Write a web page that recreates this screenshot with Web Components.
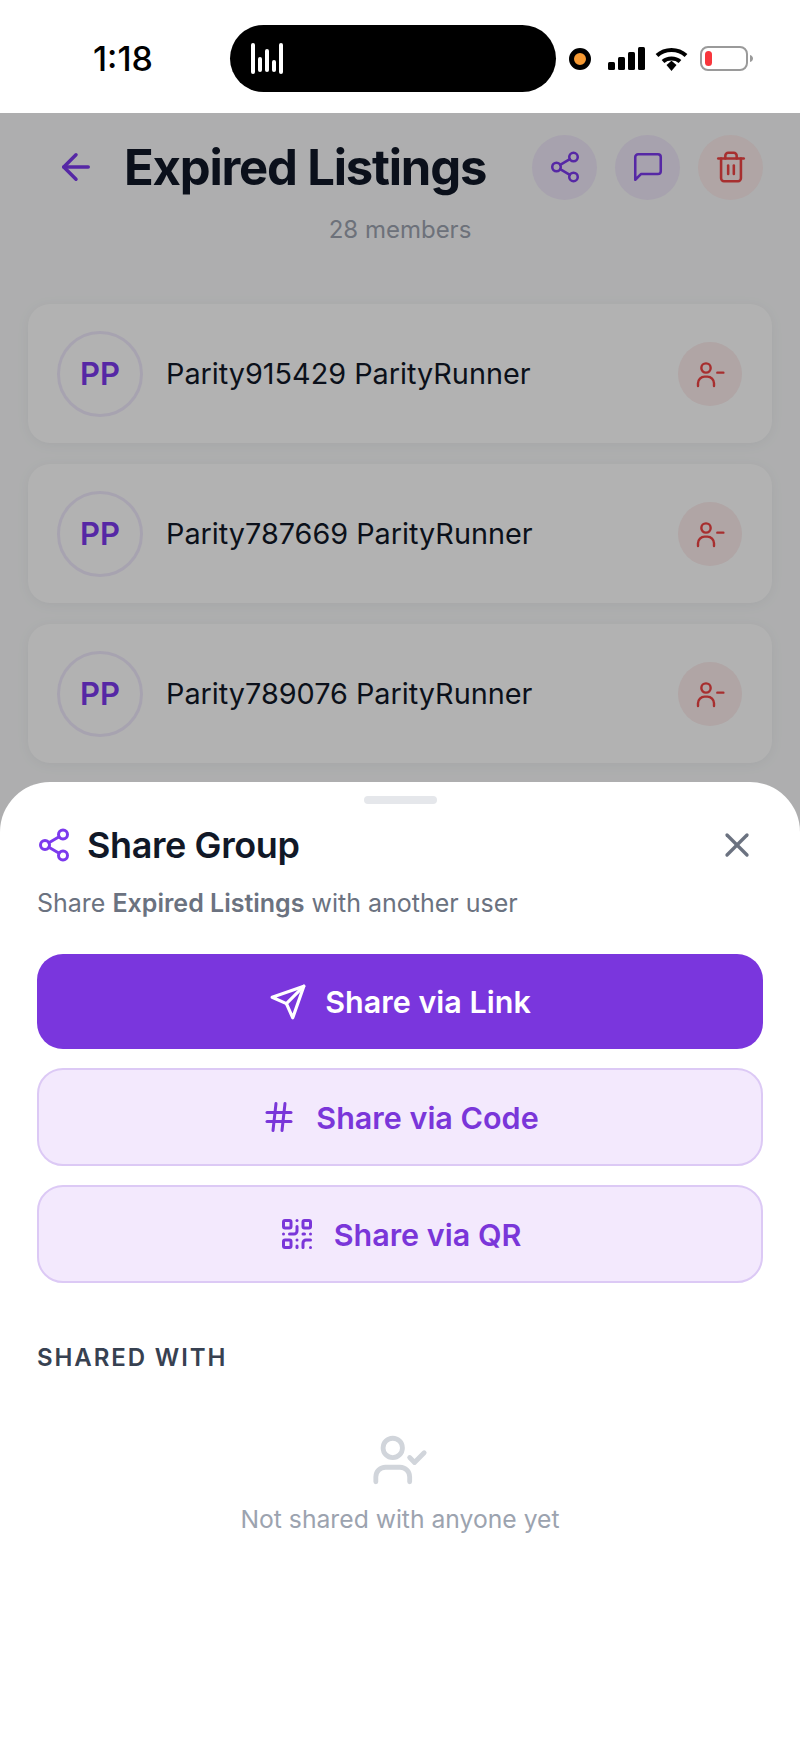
<!DOCTYPE html>
<html>
<head>
<meta charset="utf-8">
<title>Expired Listings</title>
<style>
    html, body { margin: 0; padding: 0; }
    body {
        position: relative;
        width: 800px;
        height: 1738px;
        overflow: hidden;
        background: #f9fafb;
        font-family: Inter, "Liberation Sans", sans-serif;
    }
</style>
</head>
<body>
<status-bar></status-bar>
<group-screen title="Expired Listings" members="28 members">
    <member-card name="Parity915429 ParityRunner" initials="PP"></member-card>
    <member-card name="Parity787669 ParityRunner" initials="PP"></member-card>
    <member-card name="Parity789076 ParityRunner" initials="PP"></member-card>
</group-screen>
<share-sheet group="Expired Listings">
    <share-button variant="primary" icon="send" size="38" gap="18">Share via Link</share-button>
    <share-button icon="hash" size="36" gap="19">Share via Code</share-button>
    <share-button icon="qr" size="36" gap="19">Share via QR</share-button>
</share-sheet>

<script>
const ICONS = {
    back: '<path d="M12 19l-7-7 7-7"/><path d="M19 12H5"/>',
    share: '<circle cx="18" cy="5" r="3"/><circle cx="6" cy="12" r="3"/><circle cx="18" cy="19" r="3"/><path d="M8.59 13.51l6.83 3.98"/><path d="M15.41 6.51l-6.82 3.98"/>',
    message: '<path d="M21 15a2 2 0 0 1-2 2H7l-4 4V5a2 2 0 0 1 2-2h14a2 2 0 0 1 2 2z"/>',
    trash: '<path d="M3 6h18"/><path d="M19 6v14c0 1-1 2-2 2H7c-1 0-2-1-2-2V6"/><path d="M8 6V4c0-1 1-2 2-2h4c1 0 2 1 2 2v2"/><path d="M10 11v6"/><path d="M14 11v6"/>',
    userminus: '<path d="M3 21v-2a5 5 0 0 1 5-5h2a5 5 0 0 1 5 5v2"/><circle cx="9" cy="7.500" r="3.500"/><path d="M22 11h-4.500"/>',
    usercheck: '<path d="M16 21v-2a4 4 0 0 0-4-4H6a4 4 0 0 0-4 4v2"/><circle cx="9" cy="7" r="4"/><path d="M16 11l2 2 4-4"/>',
    close: '<path d="M18 6L6 18"/><path d="M6 6l12 12"/>',
    send: '<path d="M22 2L11 13"/><path d="M22 2l-7 20-4-9-9-4z"/>',
    hash: '<path d="M4 9h16"/><path d="M4 15h16"/><path d="M10 3L8 21"/><path d="M16 3l-2 18"/>',
    qr: '<rect x="3" y="3" width="5" height="5" rx="1"/><rect x="16" y="3" width="5" height="5" rx="1"/><rect x="3" y="16" width="5" height="5" rx="1"/><path d="M21 16h-3a2 2 0 0 0-2 2v3"/><path d="M21 21v.01"/><path d="M12 7v3a2 2 0 0 1-2 2H7"/><path d="M3 12h.01"/><path d="M12 3h.01"/><path d="M12 16v.01"/><path d="M16 12h1"/><path d="M21 12v.01"/><path d="M12 21v-1"/>'
};

class AppIcon extends HTMLElement {
    connectedCallback() {
        const size = this.getAttribute('size') || 24;
        const stroke = this.getAttribute('stroke') || 2;
        this.attachShadow({ mode: 'open' });
        this.shadowRoot.innerHTML = `
            <style>
                :host { display: block; flex: none; line-height: 0; }
            </style>
            <svg width="${size}" height="${size}" viewBox="0 0 24 24" fill="none" stroke="currentColor"
                stroke-width="${stroke}" stroke-linecap="round" stroke-linejoin="round">${ICONS[this.getAttribute('name')]}</svg>
        `;
    }
}

class StatusBar extends HTMLElement {
    constructor() {
        super();
        this.attachShadow({ mode: 'open' });
        this.shadowRoot.innerHTML = `
            <style>
                :host {
                    display: flex;
                    position: relative;
                    z-index: 2;
                    align-items: center;
                    height: 113px;
                    padding-top: 4px;
                    box-sizing: border-box;
                    background: #fff;
                    color: #000;
                }
                .time {
                    width: 230px;
                    box-sizing: border-box;
                    padding-left: 93px;
                    font: 500 34px "Inter", sans-serif;
                }
                .pill {
                    display: flex;
                    align-items: center;
                    width: 326px;
                    height: 67px;
                    box-sizing: border-box;
                    padding-left: 21px;
                    border-radius: 34px;
                    background: #000;
                }
                .bars { display: flex; align-items: flex-end; gap: 3px; height: 31px; }
                .bars i { display: block; width: 4px; border-radius: 2px; background: #fff; }
                .bars i.short { margin-bottom: 2px; }
                .right { display: flex; align-items: center; margin-left: 13px; }
                .dot { width: 12px; height: 12px; border: 5px solid #000; border-radius: 50%; background: #f79a33; }
                svg { display: block; }
            </style>
            <div class="time">1:18</div>
            <div class="pill">
                <div class="bars">
                    <i style="height:31px"></i><i class="short" style="height:15px"></i><i class="short" style="height:23px"></i><i class="short" style="height:12px"></i><i style="height:31px"></i>
                </div>
            </div>
            <div class="right">
                <div class="dot"></div>
                <svg style="margin-left:17px" width="37" height="23" viewBox="0 0 37 23" fill="#000">
                    <rect x="0" y="15" width="7" height="8" rx="1.5"/><rect x="10" y="10" width="7" height="13" rx="1.5"/>
                    <rect x="20" y="5" width="7" height="18" rx="1.5"/><rect x="30" y="0" width="7" height="23" rx="1.5"/>
                </svg>
                <svg style="margin-left:10px" width="33" height="24" viewBox="0 0 33 24" fill="none" stroke="#000" stroke-width="4">
                    <path d="M2 8.5C10 1 23 1 31 8.5"/><path d="M8 14.5C12.500 10.500 20.500 10.500 25 14.500"/>
                    <path d="M11.500 18L16.500 13.800L21.500 18L16.500 24Z" fill="#000" stroke="none"/>
                </svg>
                <svg style="margin-left:12px" width="54" height="25" viewBox="0 0 54 25">
                    <rect x="1" y="1" width="46" height="23" rx="7" fill="none" stroke="#9a9a9a" stroke-width="2"/>
                    <rect x="5" y="5" width="7" height="15" rx="3.500" fill="#f8363c"/>
                    <path d="M50 9c2 .5 3 2 3 3.500s-1 3-3 3.500z" fill="#9a9a9a"/>
                </svg>
            </div>
        `;
    }
}

class GroupScreen extends HTMLElement {
    connectedCallback() {
        this.attachShadow({ mode: 'open' });
        this.shadowRoot.innerHTML = `
            <style>
                :host { display: block; position: relative; height: 1625px; box-sizing: border-box; padding-top: 21px; }
                .scrim { position: absolute; inset: 0; background: rgba(0, 0, 0, 0.3); }
                .top { display: flex; align-items: center; height: 66px; padding: 0 37px 0 55px; }
                .back { color: #7c3aed; }
                h1 {
                    margin: 0 0 0 27px;
                    font: 700 49px Inter, sans-serif;
                    letter-spacing: -1.2px;
                    color: #111827;
                    white-space: nowrap;
                }
                .actions { display: flex; gap: 18px; margin-left: auto; }
                .action {
                    display: flex;
                    align-items: center;
                    justify-content: center;
                    width: 65px;
                    height: 65px;
                    border-radius: 50%;
                    background: #f0e8fa;
                    color: #7c3aed;
                }
                .action.red { background: #fcecec; color: #ef4444; }
                .count { margin-top: 15px; text-align: center; font: 400 24px/30px Inter, sans-serif; color: #9ca3af; }
                .list { display: flex; flex-direction: column; gap: 21px; margin: 59px 28px 0; }
            </style>
            <div class="top">
                <app-icon class="back" name="back" size="42" stroke="2"></app-icon>
                <h1>${this.getAttribute('title')}</h1>
                <div class="actions">
                    <div class="action"><app-icon name="share" size="34" stroke="1.800"></app-icon></div>
                    <div class="action"><app-icon name="message" size="34" stroke="1.800"></app-icon></div>
                    <div class="action red"><app-icon name="trash" size="34" stroke="1.800"></app-icon></div>
                </div>
            </div>
            <div class="count">${this.getAttribute('members')}</div>
            <div class="list"><slot></slot></div>
            <div class="scrim"></div>
        `;
    }
}

class MemberCard extends HTMLElement {
    connectedCallback() {
        this.attachShadow({ mode: 'open' });
        this.shadowRoot.innerHTML = `
            <style>
                :host {
                    display: flex;
                    align-items: center;
                    height: 139px;
                    box-sizing: border-box;
                    padding: 0 30px 0 29px;
                    border-radius: 22px;
                    background: #fff;
                    box-shadow: 0 2px 14px rgba(0, 0, 0, 0.05);
                }
                .avatar {
                    display: flex;
                    align-items: center;
                    justify-content: center;
                    flex: none;
                    width: 86px;
                    height: 86px;
                    box-sizing: border-box;
                    border: 3px solid #f0eafc;
                    border-radius: 50%;
                    background: #fff;
                    font: 600 31px Inter, sans-serif;
                    color: #7c3aed;
                }
                .name { margin-left: 23px; font: 400 28.800px Inter, sans-serif; color: #111827; white-space: nowrap; }
                .remove {
                    display: flex;
                    align-items: center;
                    justify-content: center;
                    width: 64px;
                    height: 64px;
                    margin-left: auto;
                    border-radius: 50%;
                    background: #fcecec;
                    color: #ef4444;
                }
            </style>
            <div class="avatar">${this.getAttribute('initials')}</div>
            <div class="name">${this.getAttribute('name')}</div>
            <div class="remove"><app-icon name="userminus" size="32" stroke="1.800"></app-icon></div>
        `;
    }
}

class ShareButton extends HTMLElement {
    connectedCallback() {
        this.attachShadow({ mode: 'open' });
        this.shadowRoot.innerHTML = `
            <style>
                :host {
                    display: flex;
                    align-items: center;
                    justify-content: center;
                    gap: ${this.getAttribute('gap')}px;
                    height: 98px;
                    box-sizing: border-box;
                    border: 2px solid #dcc9f5;
                    border-radius: 26px;
                    background: #f3e9fd;
                    color: #7a36d9;
                    font: 600 30.5px Inter, sans-serif;
                }
                :host([variant="primary"]) {
                    height: 95px;
                    border: 0;
                    background: #7a36dd;
                    color: #fff;
                }
            </style>
            <app-icon name="${this.getAttribute('icon')}" size="${this.getAttribute('size')}"></app-icon>
            <span><slot></slot></span>
        `;
    }
}

class ShareSheet extends HTMLElement {
    connectedCallback() {
        this.attachShadow({ mode: 'open' });
        this.shadowRoot.innerHTML = `
            <style>
                :host {
                    display: block;
                    position: absolute;
                    z-index: 3;
                    left: 0;
                    right: 0;
                    bottom: 0;
                    height: 956px;
                    box-sizing: border-box;
                    padding: 14px 37px 0;
                    border-radius: 50px 50px 0 0;
                    background: #fff;
                }
                .handle { width: 73px; height: 8px; margin: 0 auto; border-radius: 4px; background: #e5e7eb; }
                .head { display: flex; align-items: center; height: 40px; margin-top: 21px; }
                .head .mark { color: #7c3aed; margin-left: -1px; }
                h2 { margin: 0 0 0 15px; font: 600 36px Inter, sans-serif; letter-spacing: -0.4px; color: #111827; }
                .close { margin-left: auto; margin-right: 6px; color: #6b7280; }
                p { margin: 23px 0 0; font: 400 25px/30px Inter, sans-serif; color: #6b7280; }
                p b { font-weight: 600; }
                .buttons { display: flex; flex-direction: column; gap: 19px; margin-top: 36px; }
                .label { margin-top: 60px; font: 600 24px/30px Inter, sans-serif; letter-spacing: 1.900px; color: #374151; }
                .empty { display: flex; flex-direction: column; align-items: center; margin-top: 58px; color: #d1d5db; }
                .empty div { margin-top: 15px; font: 400 24.700px/30px Inter, sans-serif; color: #9ca3af; }
            </style>
            <div class="handle"></div>
            <div class="head">
                <app-icon class="mark" name="share" size="36"></app-icon>
                <h2>Share Group</h2>
                <app-icon class="close" name="close" size="40"></app-icon>
            </div>
            <p>Share <b>${this.getAttribute('group')}</b> with another user</p>
            <div class="buttons"><slot></slot></div>
            <div class="label">SHARED WITH</div>
            <div class="empty">
                <app-icon name="usercheck" size="58"></app-icon>
                <div>Not shared with anyone yet</div>
            </div>
        `;
    }
}

customElements.define('app-icon', AppIcon);
customElements.define('status-bar', StatusBar);
customElements.define('group-screen', GroupScreen);
customElements.define('member-card', MemberCard);
customElements.define('share-button', ShareButton);
customElements.define('share-sheet', ShareSheet);
</script>
</body>
</html>
